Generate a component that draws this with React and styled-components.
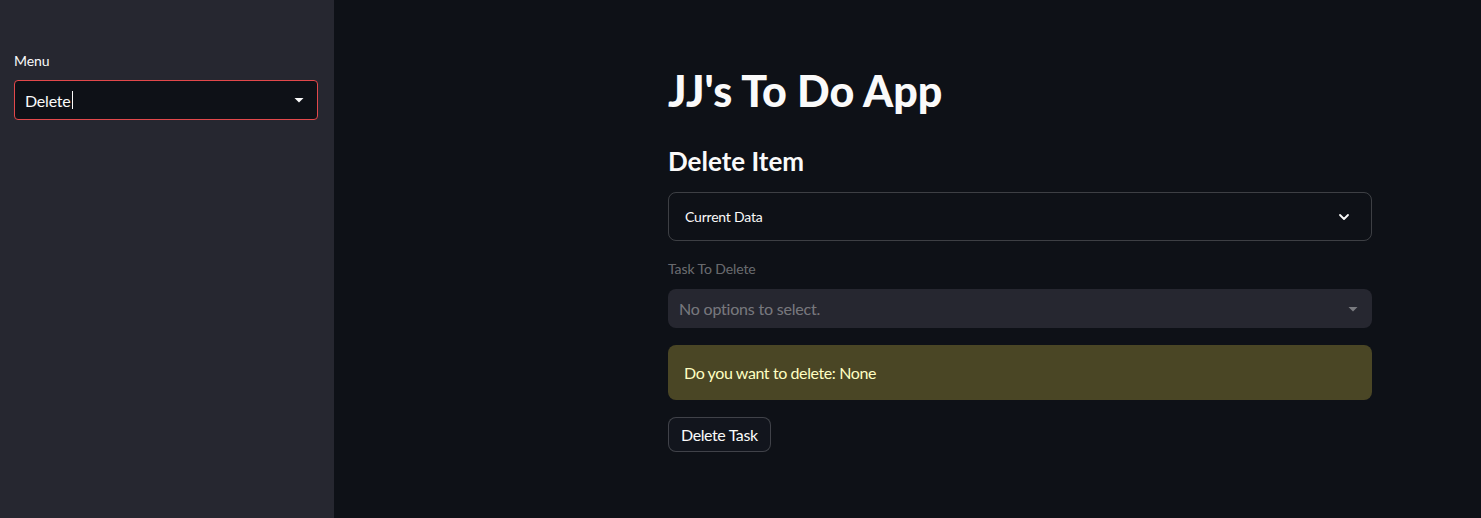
import styled, { createGlobalStyle } from "styled-components";

const GlobalStyle = createGlobalStyle`
  html, body {
    margin: 0;
    padding: 0;
    background: #0e1117;
    font-family: "Lato", "Open Sans", sans-serif;
    color: #fafafa;
  }
`;

const Page = styled.div`
  display: flex;
  height: 518px;
  overflow: hidden;
`;

const Sidebar = styled.aside`
  width: 334px;
  flex-shrink: 0;
  background: #262730;
  padding: 52px 16px 0 14px;
  box-sizing: border-box;
`;

const Main = styled.main`
  flex: 1;
  padding: 67px 0 0 334px;
  box-sizing: border-box;
`;

const Column = styled.div`
  width: 704px;
  display: flex;
  flex-direction: column;
`;

const FieldLabel = styled.div`
  font-size: 14px;
  line-height: 18px;
  margin-bottom: ${(p) => (p.$disabled ? "11px" : "10px")};
  letter-spacing: -0.1px;
  color: ${(p) => (p.$disabled ? "rgba(250, 250, 250, 0.4)" : "#fafafa")};
`;

const SelectBox = styled.div`
  display: flex;
  align-items: center;
  justify-content: space-between;
  box-sizing: border-box;
  height: ${(p) => (p.$disabled ? "39px" : "40px")};
  padding: 0 12px 0 10px;
  border-radius: ${(p) => (p.$disabled ? "8px" : "4px")};
  border: 1px solid ${(p) => (p.$focused ? "#e2484b" : "transparent")};
  background: ${(p) => (p.$disabled ? "#262730" : "#0e1117")};
  font-size: 16px;
  letter-spacing: -0.2px;
  color: ${(p) => (p.$disabled ? "rgba(250, 250, 250, 0.4)" : "#fafafa")};
`;

const Value = styled.span`
  display: flex;
  align-items: center;
`;

const Cursor = styled.span`
  display: inline-block;
  width: 1px;
  height: 18px;
  margin-left: 1px;
  background: #fafafa;
`;

const Title = styled.h1`
  margin: 0 0 28px;
  font-size: 43px;
  line-height: 48px;
  font-weight: 900;
`;

const Subtitle = styled.h2`
  margin: 0 0 13px;
  font-size: 26px;
  line-height: 36px;
  font-weight: 700;
`;

const Expander = styled.div`
  display: flex;
  align-items: center;
  justify-content: space-between;
  height: 49px;
  box-sizing: border-box;
  padding: 0 20px 0 16px;
  border: 1px solid rgba(250, 250, 250, 0.2);
  border-radius: 8px;
  font-size: 14px;
  letter-spacing: -0.2px;
  margin-bottom: 19px;
`;

const Alert = styled.div`
  margin-top: 17px;
  height: 55px;
  box-sizing: border-box;
  padding: 0 16px;
  display: flex;
  align-items: center;
  border-radius: 8px;
  background: #4a4625;
  color: #ffffc2;
  font-size: 16px;
  letter-spacing: -0.4px;
`;

const Button = styled.button`
  align-self: flex-start;
  margin-top: 17px;
  height: 35px;
  padding: 0 12px;
  border-radius: 8px;
  border: 1px solid rgba(250, 250, 250, 0.2);
  background: #12151d;
  color: #fafafa;
  font-family: inherit;
  font-size: 16px;
  letter-spacing: -0.4px;
`;

const Caret = ({ color }) => (
  <svg width="12" height="12" viewBox="0 0 12 12">
    <path d="M1.5 4h9L6 8.5z" fill={color} />
  </svg>
);

const Chevron = () => (
  <svg width="14" height="14" viewBox="0 0 14 14">
    <path
      d="M3 5l4 4 4-4"
      fill="none"
      stroke="#fafafa"
      strokeWidth="1.8"
      strokeLinecap="round"
      strokeLinejoin="round"
    />
  </svg>
);

export default function App() {
  return (
    <Page>
      <GlobalStyle />
      <Sidebar>
        <FieldLabel>Menu</FieldLabel>
        <SelectBox $focused>
          <Value>
            Delete
            <Cursor />
          </Value>
          <Caret color="#fafafa" />
        </SelectBox>
      </Sidebar>
      <Main>
        <Column>
          <Title>JJ's To Do App</Title>
          <Subtitle>Delete Item</Subtitle>
          <Expander>
            <span>Current Data</span>
            <Chevron />
          </Expander>
          <FieldLabel $disabled>Task To Delete</FieldLabel>
          <SelectBox $disabled>
            <Value>No options to select.</Value>
            <Caret color="rgba(250, 250, 250, 0.4)" />
          </SelectBox>
          <Alert>Do you want to delete: None</Alert>
          <Button>Delete Task</Button>
        </Column>
      </Main>
    </Page>
  );
}
